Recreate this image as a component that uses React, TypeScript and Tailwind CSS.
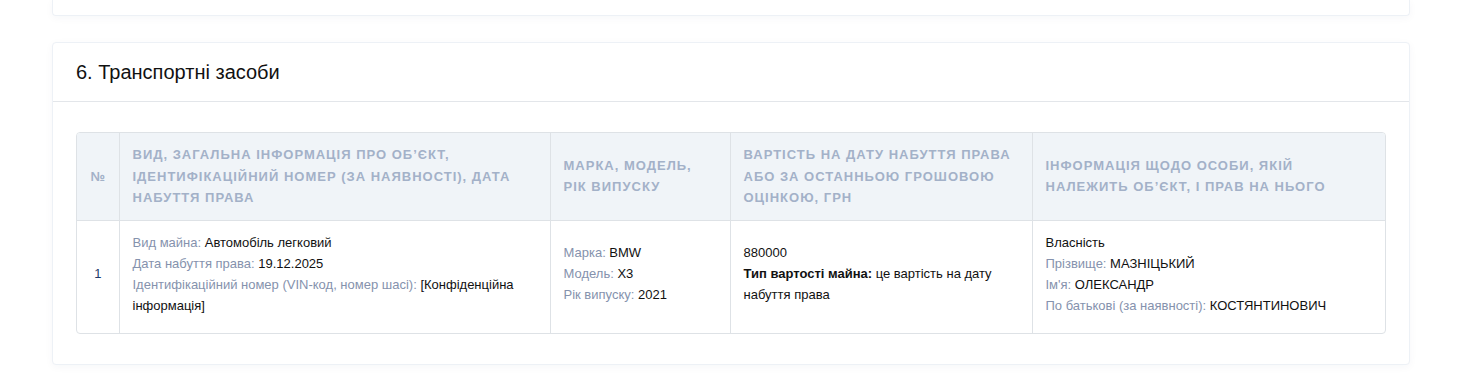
const font = { fontFamily: '"Liberation Sans", Arial, sans-serif' };

function Label({ children }: { children: React.ReactNode }) {
  return <span className="text-[#8592ad]">{children}</span>;
}

export default function App() {
  return (
    <div className="min-h-[387px] bg-white pl-[52px] pr-[62px]" style={font}>
      <div className="h-[16px] rounded-b border border-t-0 border-[#edf1f6] bg-white shadow-[0_2px_8px_rgba(30,50,90,0.04)]" />
      <section className="mt-[26px] rounded border border-[#edf1f6] bg-white shadow-[0_2px_8px_rgba(30,50,90,0.04)]">
        <div className="flex h-[59px] items-center border-b border-[#e3e6ea] px-[23px]">
          <h2 className="text-[20px] text-[#111]">6. Транспортні засоби</h2>
        </div>
        <div className="px-[23px] pb-[30px] pt-[30px]">
          <div className="overflow-hidden rounded border border-[#dee2e6]">
            <table className="w-full table-fixed border-collapse text-[13px] text-[#111]">
              <colgroup>
                <col className="w-[42px]" />
                <col className="w-[431px]" />
                <col className="w-[180px]" />
                <col className="w-[302px]" />
                <col />
              </colgroup>
              <thead>
                <tr className="bg-[#f0f4f8] text-left align-middle text-[13px] font-bold uppercase leading-[21.5px] tracking-[1px] text-[#a3b1c8]">
                  <th className="px-[12px] py-[11px] text-center font-bold tracking-normal">№</th>
                  <th className="border-l border-[#dee2e6] pl-[13px] pr-[11px] py-[11px] font-bold">
                    Вид, загальна інформація про об’єкт, ідентифікаційний номер (за наявності), дата набуття права
                  </th>
                  <th className="border-l border-[#dee2e6] pl-[13px] pr-[11px] py-[11px] font-bold">
                    Марка, модель, рік випуску
                  </th>
                  <th className="border-l border-[#dee2e6] pl-[13px] pr-[11px] py-[11px] font-bold">
                    Вартість на дату набуття права або за останньою грошовою оцінкою, грн
                  </th>
                  <th className="border-l border-[#dee2e6] pl-[13px] pr-[11px] py-[11px] font-bold">
                    Інформація щодо особи, якій належить об’єкт, і прав на нього
                  </th>
                </tr>
              </thead>
              <tbody>
                <tr className="border-t border-[#dee2e6] align-middle leading-[21px]">
                  <td className="px-[12px] pb-[17px] pt-[11px] text-center text-[#1f3a6a]">1</td>
                  <td className="border-l border-[#dee2e6] pl-[13px] pr-[11px] pb-[17px] pt-[11px]">
                    <div><Label>Вид майна:</Label> Автомобіль легковий</div>
                    <div><Label>Дата набуття права:</Label> 19.12.2025</div>
                    <div>
                      <Label>Ідентифікаційний номер (VIN-код, номер шасі):</Label> [Конфіденційна інформація]
                    </div>
                  </td>
                  <td className="border-l border-[#dee2e6] pl-[13px] pr-[11px] pb-[17px] pt-[11px]">
                    <div><Label>Марка:</Label> BMW</div>
                    <div><Label>Модель:</Label> X3</div>
                    <div><Label>Рік випуску:</Label> 2021</div>
                  </td>
                  <td className="border-l border-[#dee2e6] pl-[13px] pr-[11px] pb-[17px] pt-[11px]">
                    <div>880000</div>
                    <div>
                      <span className="font-bold">Тип вартості майна:</span> це вартість на дату набуття права
                    </div>
                  </td>
                  <td className="border-l border-[#dee2e6] pl-[13px] pr-[11px] pb-[17px] pt-[11px]">
                    <div>Власність</div>
                    <div><Label>Прізвище:</Label> МАЗНІЦЬКИЙ</div>
                    <div><Label>Ім'я:</Label> ОЛЕКСАНДР</div>
                    <div><Label>По батькові (за наявності):</Label> КОСТЯНТИНОВИЧ</div>
                  </td>
                </tr>
              </tbody>
            </table>
          </div>
        </div>
      </section>
    </div>
  );
}
